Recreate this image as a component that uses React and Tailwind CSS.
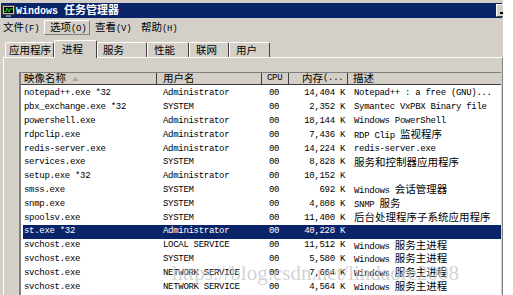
import React from 'react';

const CJK = /([\u2e80-\u9fff\uff00-\uffef]+)/;

// split text so Chinese runs get the CJK font at their own size
function T({ children, bold }) {
    return String(children).split(CJK).map((s, i) =>
        i % 2 ? (
            <span
                key={i}
                className={bold
                    ? "font-['Noto_Sans_CJK_SC',sans-serif] text-[11px] tracking-normal font-bold"
                    : "font-['Noto_Sans_CJK_SC',sans-serif] text-[10.5px] tracking-normal"}
            >
                {s}
            </span>
        ) : s
    );
}

const ROWS = [
    ['notepad++.exe *32', 'Administrator', '00', '14,404 K', 'Notepad++ : a free (GNU)...'],
    ['pbx_exchange.exe *32', 'SYSTEM', '00', '2,352 K', 'Symantec VxPBX Binary file'],
    ['powershell.exe', 'Administrator', '00', '18,144 K', 'Windows PowerShell'],
    ['rdpclip.exe', 'Administrator', '00', '7,436 K', 'RDP Clip 监视程序'],
    ['redis-server.exe', 'Administrator', '00', '14,224 K', 'redis-server.exe'],
    ['services.exe', 'SYSTEM', '00', '8,828 K', '服务和控制器应用程序'],
    ['setup.exe *32', 'Administrator', '00', '10,152 K', ''],
    ['smss.exe', 'SYSTEM', '00', '692 K', 'Windows 会话管理器'],
    ['snmp.exe', 'SYSTEM', '00', '4,808 K', 'SNMP 服务'],
    ['spoolsv.exe', 'SYSTEM', '00', '11,400 K', '后台处理程序子系统应用程序'],
    ['st.exe *32', 'Administrator', '00', '40,228 K', ''],
    ['svchost.exe', 'LOCAL SERVICE', '00', '11,512 K', 'Windows 服务主进程'],
    ['svchost.exe', 'SYSTEM', '00', '5,580 K', 'Windows 服务主进程'],
    ['svchost.exe', 'NETWORK SERVICE', '00', '7,664 K', 'Windows 服务主进程'],
    ['svchost.exe', 'NETWORK SERVICE', '00', '4,564 K', 'Windows 服务主进程'],
];
const SELECTED = 10;

const TABS = [
    { label: '应用程序', w: 'w-[49px] pl-[3px]' },
    { label: '进程', w: 'w-[43px] pl-[7px]', active: true },
    { label: '服务', w: 'w-[50px] pl-[5px]' },
    { label: '性能', w: 'w-[42px] pl-[6px]' },
    { label: '联网', w: 'w-[40px] pl-[6px]' },
    { label: '用户', w: 'w-[41px] pl-[6px]' },
];

function TaskIcon() {
    return (
        <svg width="13" height="12" viewBox="0 0 13 12" className="shrink-0">
            <rect x="0.5" y="0.5" width="12" height="9" fill="#c0c0c0" stroke="#404040" />
            <rect x="2" y="2" width="9" height="6" fill="#000" />
            <polyline points="2,6.5 4,6.5 5,3 7,7 8,4 11,4" stroke="#00e000" fill="none" />
            <rect x="4" y="10" width="5" height="2" fill="#808080" />
        </svg>
    );
}

export default function App() {
    const latin = "font-['Liberation_Mono',monospace] text-[9px] tracking-[-0.3px] leading-none";

    return (
        <div className={`relative w-[503px] h-[295px] overflow-hidden bg-[#d4d0c8] text-black pt-[3px] flex flex-col ${latin}`}>
            {/* Title bar */}
            <div className="h-[15px] mx-[1px] bg-[#0a246a] flex items-center text-white shrink-0">
                <div className="pl-[1px]"><TaskIcon /></div>
                <span className="ml-[1px] font-bold text-[10px] tracking-[0px]">
                    <T bold>{'Windows 任务管理器'}</T>
                </span>
                <div className="ml-auto mr-[-10px] w-[16px] h-[13px] bg-[#d4d0c8] border-t border-l border-white border-b border-r border-b-[#404040] border-r-[#404040] flex items-end pl-[3px] pb-[2px]">
                    <div className="w-[6px] h-[2px] bg-black" />
                </div>
            </div>

            {/* Menu bar */}
            <div className="h-[19px] flex items-center pl-[3px] shrink-0">
                <div className="w-[41px]"><T>文件(F)</T></div>
                <div className="w-[46px] h-[15px] pl-[5px] flex items-center border-t border-l border-white border-b border-r border-b-[#808080] border-r-[#808080]">
                    <span><T>选项(O)</T></span>
                </div>
                <div className="w-[46px] pl-[5px]"><T>查看(V)</T></div>
                <div className="w-[46px] pl-[5px]"><T>帮助(H)</T></div>
            </div>

            {/* Tabs */}
            <div className="h-[20px] flex items-end pl-[5px] shrink-0 relative z-10">
                {TABS.map((t) => (
                    <div
                        key={t.label}
                        className={t.active
                            ? `${t.w} h-[18px] -mb-px bg-[#d4d0c8] flex items-start pt-[3px] border-t border-l border-white border-r border-r-[#404040] rounded-t-[2px]`
                            : `${t.w} h-[15px] flex items-center border-t border-l border-white border-r border-r-[#404040] rounded-t-[2px]`}
                    >
                        <T>{t.label}</T>
                    </div>
                ))}
            </div>

            {/* Panel */}
            <div className="flex-1 ml-[3px] border-t border-l border-white border-r border-r-[#808080] pt-[14px] pl-[15px] pr-px flex flex-col min-h-0">
                <div className="flex-1 bg-white border-t border-l-2 border-t-[#808080] border-l-[#808080] flex flex-col min-h-0">
                    {/* Header */}
                    <div className="h-[12px] flex bg-[#d4d0c8] shrink-0">
                        <div className="w-[136px] pl-[3px] flex items-center gap-[6px] border-r border-[#404040] border-b">
                            <T>映像名称</T>
                            <svg width="7" height="4" viewBox="0 0 7 4"><path d="M0 4 L3.5 0 L7 4 Z" fill="#a8a8a8" /></svg>
                        </div>
                        <div className="w-[105px] pl-[6px] flex items-center border-r border-b border-[#404040]"><T>用户名</T></div>
                        <div className="w-[27px] pl-[5px] flex items-center border-r border-b border-[#404040]">CPU</div>
                        <div className="w-[59px] pl-[13px] flex items-center border-r border-b border-[#404040]"><T>内存(...</T></div>
                        <div className="flex-1 pl-[5px] flex items-center border-b border-[#404040]"><T>描述</T></div>
                    </div>

                    {/* Rows */}
                    <div className="pt-[2px] pl-[2px]">
                        {ROWS.map((r, i) => (
                            <div
                                key={i}
                                className={i === SELECTED
                                    ? 'h-[13.8px] flex items-center whitespace-nowrap bg-[#0a246a] text-white'
                                    : 'h-[13.8px] flex items-center whitespace-nowrap'}
                            >
                                <div className="w-[134px] pl-[1px]">{r[0]}</div>
                                <div className="w-[105px] pl-[6px]">{r[1]}</div>
                                <div className="w-[27px] pl-[7px]">{r[2]}</div>
                                <div className="w-[59px] pr-[3px] text-right">{r[3]}</div>
                                <div className="flex-1 pl-[6px]"><T>{r[4]}</T></div>
                            </div>
                        ))}
                    </div>
                </div>
            </div>

            {/* CSDN watermark */}
            <div className="absolute left-[172px] top-[263px] pointer-events-none font-['Liberation_Serif',serif] text-[21px] tracking-normal leading-none text-[#c8c8c8]/80">
                https://blog.csdn.net/lindaore2008
            </div>
        </div>
    );
}
